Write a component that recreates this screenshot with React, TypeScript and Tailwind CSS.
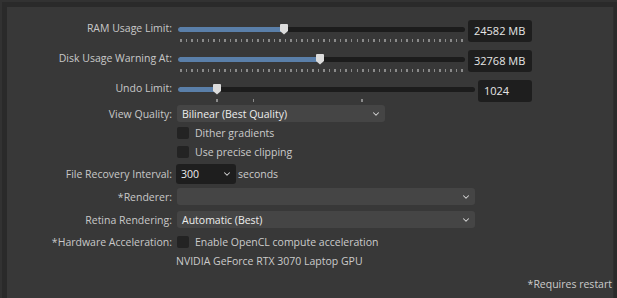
import { ChevronDown } from "lucide-react";

const font = { fontFamily: '"Open Sans", "Noto Sans", sans-serif' };

function Ticks({ count }: { count: number }) {
  return (
    <div className="flex justify-between px-[2px] h-[3px]">
      {Array.from({ length: count }).map((_, i) => (
        <div key={i} className="w-[1.5px] h-[3px] bg-[#8a8a8a]" />
      ))}
    </div>
  );
}

function Slider({ width, pct, ticks }: { width: number; pct: number; ticks: React.ReactNode }) {
  return (
    <div style={{ width }} className="pt-[7px]">
      <div className="relative h-[5px] rounded-full bg-[#1c1c1c]">
        <div className="h-full rounded-full bg-[#5a7fa9]" style={{ width: `${pct}%` }} />
        <svg
          className="absolute top-[-3px]"
          style={{ left: `calc(${pct}% - 4px)` }}
          width="8"
          height="11"
          viewBox="0 0 8 11"
        >
          <path d="M1 0 H7 A1 1 0 0 1 8 1 V7 L4 10.5 L0 7 V1 A1 1 0 0 1 1 0 Z" fill="#dcdcdc" />
        </svg>
      </div>
      <div className="mt-[7px]">{ticks}</div>
    </div>
  );
}

function Label({ children }: { children: React.ReactNode }) {
  return <div className="w-[165px] shrink-0 text-right text-[#c8c8c8]">{children}</div>;
}

function Box({ children, w }: { children: React.ReactNode; w: string }) {
  return (
    <div className={`${w} h-[22px] rounded-[3px] bg-[#1e1e1e] pl-[6px] flex items-center text-[#e6e6e6] text-[11px]`}>
      {children}
    </div>
  );
}

function Check({ label }: { label: string }) {
  return (
    <div className="flex items-center gap-[6px]">
      <div className="w-[12px] h-[12px] rounded-[2px] bg-[#232323]" />
      <span className="text-[#cbcbcb]">{label}</span>
    </div>
  );
}

function Select({ w, text, dark }: { w: string; text?: string; dark?: boolean }) {
  return (
    <div
      className={`${w} ${dark ? "h-[20px] bg-[#1e1e1e]" : "h-[17px] bg-[#454545]"} rounded-[3px] flex items-center justify-between pl-[5px] pr-[4px] text-[#ededed]`}
    >
      <span>{text}</span>
      <ChevronDown size={10} strokeWidth={2.5} className="text-[#d8d8d8]" />
    </div>
  );
}

export default function App() {
  return (
    <div className="w-[617px] h-[298px] bg-[#323232] pt-[2px] pl-[2px] overflow-hidden" style={font}>
      <div className="h-full bg-[#2a2a2a] pt-[5px] pl-[5px] pr-[3px]">
        <div className="h-[291px] bg-[#383838] pt-[13px] text-[10.5px] leading-[16px] border-r border-[#2e2e2e]">
          {/* sliders */}
          <div className="flex h-[30px] gap-[6px]">
            <Label>RAM Usage Limit:</Label>
            <Slider width={287} pct={37} ticks={<Ticks count={52} />} />
            <div className="ml-[-3px]">
              <Box w="w-[64px]">24582 MB</Box>
            </div>
          </div>
          <div className="flex h-[30px] gap-[6px]">
            <Label>Disk Usage Warning At:</Label>
            <Slider width={287} pct={49.5} ticks={<Ticks count={52} />} />
            <div className="ml-[-3px]">
              <Box w="w-[64px]">32768 MB</Box>
            </div>
          </div>
          <div className="flex h-[25px] gap-[6px]">
            <Label>Undo Limit:</Label>
            <Slider
              width={297}
              pct={13}
              ticks={
                <div className="flex h-[3px] pl-[38px]">
                  <div className="w-[1.5px] h-[3px] bg-[#8a8a8a]" />
                  <div className="w-[1.5px] h-[3px] bg-[#8a8a8a] ml-[35px]" />
                  <div className="w-[1.5px] h-[3px] bg-[#8a8a8a] ml-[107px]" />
                </div>
              }
            />
            <div className="ml-[-3px]">
              <Box w="w-[54px]">1024</Box>
            </div>
          </div>

          {/* view quality */}
          <div className="flex items-center h-[17px] gap-[5px]">
            <Label>View Quality:</Label>
            <Select w="w-[208px]" text="Bilinear (Best Quality)" />
          </div>
          <div className="flex items-center h-[20px] gap-[5px] mt-[1px]">
            <div className="w-[165px] shrink-0" />
            <Check label="Dither gradients" />
          </div>
          <div className="flex items-center h-[18px] gap-[5px]">
            <div className="w-[165px] shrink-0" />
            <Check label="Use precise clipping" />
          </div>
          <div className="flex items-center h-[20px] gap-[4px] mt-[3px]">
            <Label>File Recovery Interval:</Label>
            <Select w="w-[60px]" text="300" dark />
            <span className="text-[#cbcbcb] ml-[-2px]">seconds</span>
          </div>
          <div className="flex items-center h-[17px] gap-[5px] mt-[4px]">
            <Label>*Renderer:</Label>
            <Select w="w-[298px]" />
          </div>
          <div className="flex items-center h-[17px] gap-[5px] mt-[6px]">
            <Label>Retina Rendering:</Label>
            <Select w="w-[298px]" text="Automatic (Best)" />
          </div>
          <div className="flex items-center h-[16px] gap-[5px] mt-[6px]">
            <Label>*Hardware Acceleration:</Label>
            <Check label="Enable OpenCL compute acceleration" />
          </div>
          <div className="flex items-center h-[16px] mt-[3px] pl-[169px] text-[#cbcbcb]">
            NVIDIA GeForce RTX 3070 Laptop GPU
          </div>
          <div className="flex justify-end h-[16px] mt-[7px] pr-[1px] text-[#cbcbcb]">*Requires restart</div>
        </div>
      </div>
    </div>
  );
}
